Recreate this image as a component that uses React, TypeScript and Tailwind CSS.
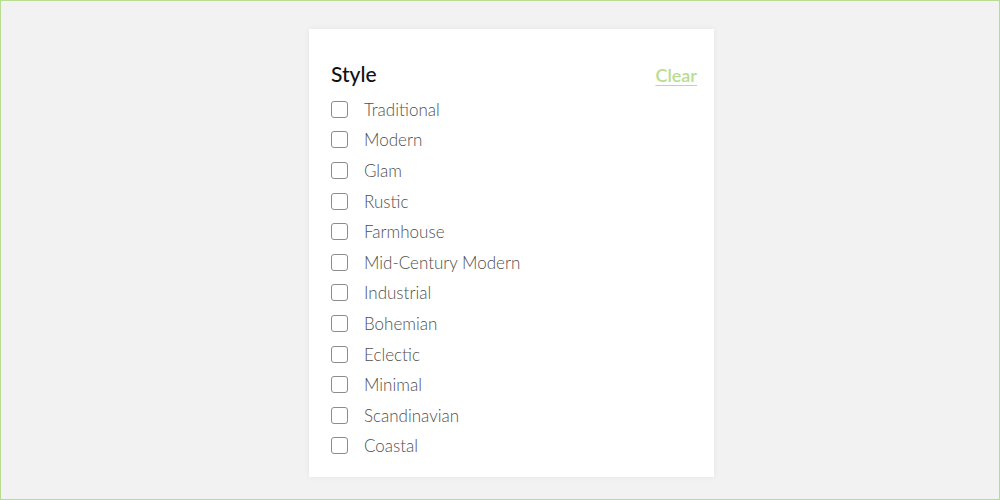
const styles = [
  'Traditional',
  'Modern',
  'Glam',
  'Rustic',
  'Farmhouse',
  'Mid-Century Modern',
  'Industrial',
  'Bohemian',
  'Eclectic',
  'Minimal',
  'Scandinavian',
  'Coastal',
]

export default function App() {
  return (
    <div className="flex h-[500px] w-[1000px] border border-[#b9dc93] bg-[#f2f2f2] pl-[308px] pt-[28px] font-['Lato','Open_Sans',sans-serif]">
      <div className="h-[448px] w-[405px] bg-white pl-[22px] pr-[17px] pt-[31px] shadow-[0_0_6px_rgba(0,0,0,0.06)]">
        <div className="flex h-[28px] items-center justify-between">
          <h3 className="text-[21px] font-medium leading-[28px] text-[#111]">Style</h3>
          <button type="button" className="mt-[2px] text-[18px] font-semibold leading-[28px] text-[#b9dc93] underline underline-offset-[3px]">
            Clear
          </button>
        </div>
        <div className="mt-[6px] flex flex-col">
          {styles.map((label) => (
            <label key={label} className="flex h-[30.6px] items-center gap-[16px]">
              <span className="h-[17px] w-[17px] shrink-0 rounded-[3px] border-[1.5px] border-[#8c8c8c] bg-white" />
              <span className="text-[17px] font-light leading-none text-[#4f4f4f]">{label}</span>
            </label>
          ))}
        </div>
      </div>
    </div>
  )
}
